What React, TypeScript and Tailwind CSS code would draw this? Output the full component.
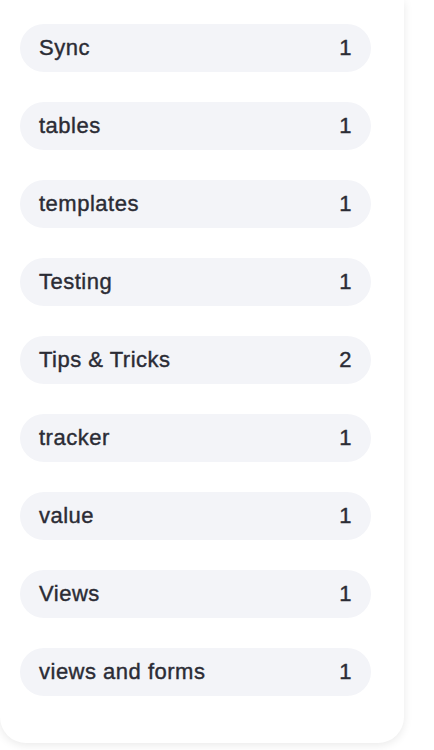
const tags: [string, number][] = [
  ["Sync", 1],
  ["tables", 1],
  ["templates", 1],
  ["Testing", 1],
  ["Tips & Tricks", 2],
  ["tracker", 1],
  ["value", 1],
  ["Views", 1],
  ["views and forms", 1],
];

export default function App() {
  return (
    <div className="min-h-[750px] w-[434px] bg-white font-['Liberation_Sans',Arial,sans-serif]">
      <div className="flex w-[404px] flex-col gap-[30px] rounded-b-[26px] bg-white pb-[47px] pl-5 pr-[33px] pt-6 shadow-[0_2px_10px_rgba(0,0,0,0.09)]">
        {tags.map(([name, count]) => (
          <div
            key={name}
            className="flex h-12 items-center justify-between rounded-full bg-[#f3f4f8] pb-[2px] pl-[19px] pr-[19px] text-[22px] font-normal tracking-[0.5px] text-[#2b2c35] [-webkit-text-stroke:0.4px_#2b2c35]"
          >
            <span>{name}</span>
            <span>{count}</span>
          </div>
        ))}
      </div>
    </div>
  );
}
